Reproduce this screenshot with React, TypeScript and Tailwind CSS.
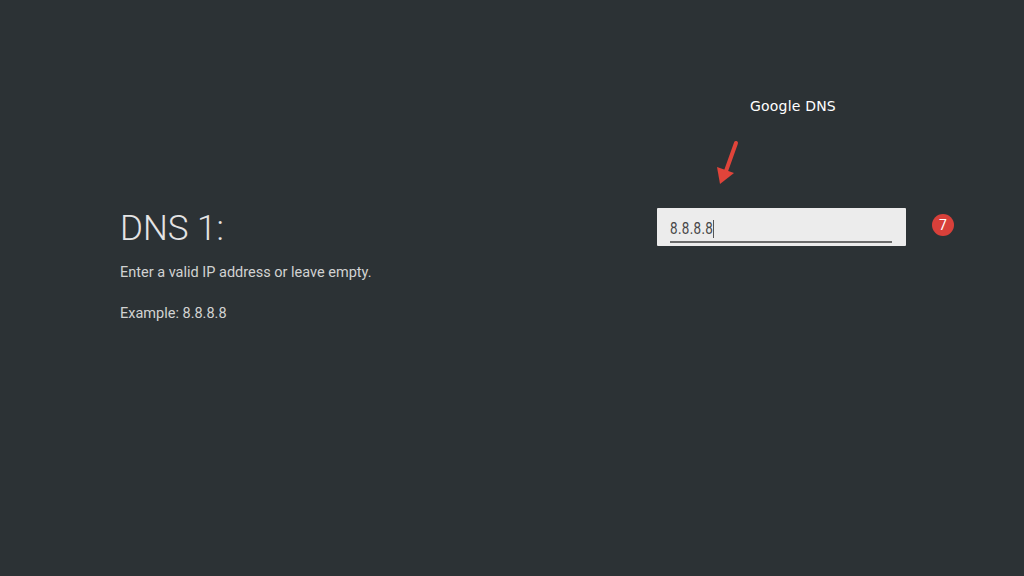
export default function App() {
  return (
    <div className="w-[1024px] h-[576px] bg-[#2c3235] flex pl-[120px] overflow-hidden">
      {/* Left: title + hints */}
      <div className="w-[537px] pt-[211px] flex flex-col" style={{ fontFamily: 'Roboto, sans-serif' }}>
        <h1 className="text-[35px] leading-none font-light text-[#e4e4e4]">DNS 1:</h1>
        <p className="mt-[17px] text-[14.5px] leading-[20px] text-[#d2d2d2]">
          Enter a valid IP address or leave empty.
        </p>
        <p className="mt-[21px] text-[14.5px] leading-[20px] text-[#d2d2d2]">Example: 8.8.8.8</p>
      </div>

      {/* Right: annotated input */}
      <div className="pt-[96px] flex flex-col">
        <div
          className="ml-[93px] text-[14px] leading-[20px] text-white tracking-[0.2px]"
          style={{ fontFamily: '"DejaVu Sans", sans-serif' }}
        >
          Google DNS
        </div>
        <svg className="ml-[55px] mt-[22px]" width="30" height="48" viewBox="0 0 30 48">
          <line x1="24" y1="5" x2="14" y2="33" stroke="#e0443a" strokeWidth="4" strokeLinecap="round" />
          <polygon points="5,29 22,35 8,46" fill="#e0443a" />
        </svg>
        <div className="mt-[22px] flex items-center">
          <div className="w-[249px] h-[38px] bg-[#ececec] rounded-[1px] px-[13px] pt-[10px] flex flex-col">
            <div className="flex items-center h-[21px]">
              <span
                className="text-[16px] leading-none text-[#474747] inline-block origin-left scale-x-[0.84] tracking-[0.4px]"
                style={{ fontFamily: 'Roboto, sans-serif' }}
              >
                8.8.8.8
              </span>
              <span className="w-px h-[18px] bg-[#555] -ml-[8px]" />
            </div>
            <div className="mt-[2px] h-[2px] bg-[#6b6b6b] w-[222px]" />
          </div>
          <div
            className="ml-[26px] -mt-[4px] w-[22px] h-[22px] rounded-full bg-[#d8403a] flex items-center justify-center text-white text-[14px] leading-none"
            style={{ fontFamily: 'Roboto, sans-serif' }}
          >
            7
          </div>
        </div>
      </div>
    </div>
  );
}
